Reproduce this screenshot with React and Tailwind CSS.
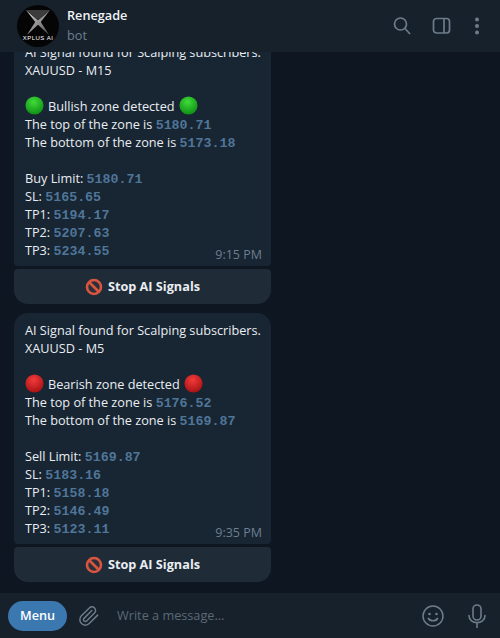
import React from "react";

function Ball({ color, dark, id }) {
  return (
    <svg width="19" height="19" viewBox="0 0 20 20" className="inline-block shrink-0 align-[-4px]">
      <defs>
        <radialGradient id={id} cx="45%" cy="30%" r="75%">
          <stop offset="0%" stopColor={color} />
          <stop offset="100%" stopColor={dark} />
        </radialGradient>
      </defs>
      <circle cx="10" cy="10" r="9.5" fill={`url(#${id})`} />
    </svg>
  );
}

function NoEntry() {
  return (
    <svg width="18" height="18" viewBox="0 0 18 18" className="shrink-0">
      <circle cx="9" cy="9" r="7" fill="#2a2f3a" stroke="#d9553f" strokeWidth="2.6" />
      <path d="M4 4 L14 14" stroke="#d9553f" strokeWidth="2.6" />
    </svg>
  );
}

function Num({ children }) {
  return <span className="font-['Liberation_Mono',monospace] text-[13.3px] font-bold text-[#4f7698]">{children}</span>;
}

function Line({ children }) {
  return <div className="h-[18px] leading-[18px] whitespace-nowrap">{children}</div>;
}

function Signal({ tf, zone, id, color, dark, top, bottom, kind, limit, sl, tp1, tp2, tp3, time }) {
  return (
    <div className="flex w-[257px] flex-col gap-[3px]">
      <div className="relative rounded-t-[14px] rounded-b-[4px] bg-[#182533] pt-2 pr-2 pb-[7px] pl-[11px] text-[12.7px] text-[#e9eef2]">
        <Line>AI Signal found for Scalping subscribers.</Line>
        <Line>XAUUSD - {tf}</Line>
        <Line />
        <Line>
          <span className="flex -translate-y-[1px] items-center gap-[4px]">
            <Ball id={id + "a"} color={color} dark={dark} />
            {zone} zone detected
            <Ball id={id + "b"} color={color} dark={dark} />
          </span>
        </Line>
        <Line>The top of the zone is <Num>{top}</Num></Line>
        <Line>The bottom of the zone is <Num>{bottom}</Num></Line>
        <Line />
        <Line>{kind} Limit: <Num>{limit}</Num></Line>
        <Line>SL: <Num>{sl}</Num></Line>
        <Line>TP1: <Num>{tp1}</Num></Line>
        <Line>TP2: <Num>{tp2}</Num></Line>
        <Line>TP3: <Num>{tp3}</Num></Line>
        <span className="absolute right-[9px] bottom-[1px] text-[12.5px] text-[#6d7f8f]">{time}</span>
      </div>
      <button className="flex h-[35px] items-center justify-center gap-[5px] rounded-t-[4px] rounded-b-[14px] bg-[#202b38] text-[12.7px] font-bold text-[#e9eef2]">
        <NoEntry />
        Stop AI Signals
      </button>
    </div>
  );
}

function Avatar() {
  return (
    <div className="relative flex h-[42px] w-[42px] shrink-0 flex-col items-center overflow-hidden rounded-full bg-[#050505]">
      <svg width="28" height="26" viewBox="0 0 30 28" className="mt-[5px]">
        <defs>
          <linearGradient id="xg" x1="0" y1="0" x2="1" y2="1">
            <stop offset="0%" stopColor="#d8d8d8" />
            <stop offset="100%" stopColor="#4e4e4e" />
          </linearGradient>
        </defs>
        <path d="M2 0 L12 13 L3 27 L15 16 L27 27 L18 13 L28 0 L15 11 Z" fill="url(#xg)" />
        <path d="M2 0 L15 11 L28 0 Z" fill="#3c3c3c" />
      </svg>
      <span className="absolute top-[29px] font-['Liberation_Sans',sans-serif] text-[6px] leading-[8px] tracking-[0.5px] whitespace-nowrap text-white">XPLUS AI</span>
    </div>
  );
}

export default function App() {
  return (
    <div className="flex h-[638px] w-[500px] flex-col overflow-hidden bg-[#0e1621] font-['Open_Sans',sans-serif]">
      <header className="z-10 flex h-[52px] shrink-0 items-center bg-[#17212b] pl-[17px]">
        <Avatar />
        <div className="ml-[8px] flex -translate-y-[1px] flex-col">
          <span className="text-[12.7px] leading-[18px] font-semibold text-[#f0f4f7]">Renegade</span>
          <span className="mt-[2px] text-[12.7px] leading-[18px] text-[#6d7f8f]">bot</span>
        </div>
        <div className="mr-[20px] ml-auto flex items-center text-[#6d7c8a]">
          <svg width="20" height="20" viewBox="0 0 20 20" fill="none" stroke="currentColor" strokeWidth="1.7" className="mr-[20px]">
            <circle cx="8.5" cy="8" r="6" />
            <path d="M13 12.5 L18 18" />
          </svg>
          <svg width="20" height="18" viewBox="0 0 20 18" fill="none" stroke="currentColor" strokeWidth="1.7" className="mr-[22px]">
            <rect x="1.5" y="1.5" width="16" height="14.5" rx="3" />
            <path d="M12 1.5 V16" />
          </svg>
          <svg width="6" height="18" viewBox="0 0 6 18" fill="currentColor">
            <circle cx="3" cy="2.5" r="2" />
            <circle cx="3" cy="9" r="2" />
            <circle cx="3" cy="15.5" r="2" />
          </svg>
        </div>
      </header>

      <main className="flex min-h-0 flex-1 flex-col justify-end gap-[9px] overflow-hidden pb-[11px] pl-[14px]">
        <Signal tf="M15" zone="Bullish" id="g" color="#3fdc3a" dark="#0c8a12" top="5180.71" bottom="5173.18" kind="Buy" limit="5180.71" sl="5165.65" tp1="5194.17" tp2="5207.63" tp3="5234.55" time="9:15 PM" />
        <Signal tf="M5" zone="Bearish" id="r" color="#f23b3b" dark="#a50f12" top="5176.52" bottom="5169.87" kind="Sell" limit="5169.87" sl="5183.16" tp1="5158.18" tp2="5146.49" tp3="5123.11" time="9:35 PM" />
      </main>

      <footer className="flex h-[45px] shrink-0 items-center bg-[#17212b] pl-[8px]">
        <button className="h-[30px] w-[59px] rounded-full bg-[#3b78b0] text-[12.7px] font-semibold text-white">Menu</button>
        <svg width="22" height="24" viewBox="0 0 24 24" fill="none" stroke="#6d7c8a" strokeWidth="1.6" strokeLinecap="round" strokeLinejoin="round" className="ml-[11px]">
          <path d="M21.44 11.05l-9.19 9.19a6 6 0 0 1-8.49-8.49l8.57-8.57A4 4 0 1 1 18 8.84l-8.59 8.57a2 2 0 0 1-2.83-2.83l8.49-8.48" />
        </svg>
        <span className="ml-[17px] text-[12.7px] text-[#5b6976]">Write a message...</span>
        <div className="mr-[14px] ml-auto flex items-center text-[#6d7c8a]">
          <svg width="22" height="22" viewBox="0 0 22 22" fill="none" stroke="currentColor" strokeWidth="1.5" className="mr-[24px]">
            <circle cx="11" cy="11" r="10" />
            <circle cx="7.5" cy="9" r="1.3" fill="currentColor" stroke="none" />
            <circle cx="14.5" cy="9" r="1.3" fill="currentColor" stroke="none" />
            <path d="M6.5 13.5 C8 16.5 14 16.5 15.5 13.5" strokeWidth="1.7" strokeLinecap="round" />
          </svg>
          <svg width="18" height="24" viewBox="0 0 18 24" fill="none" stroke="currentColor" strokeWidth="1.6" strokeLinecap="round">
            <rect x="5" y="1" width="8" height="15" rx="4" />
            <path d="M1 11.5 C1 21 17 21 17 11.5 M9 19 V23.5" />
          </svg>
        </div>
      </footer>
    </div>
  );
}
